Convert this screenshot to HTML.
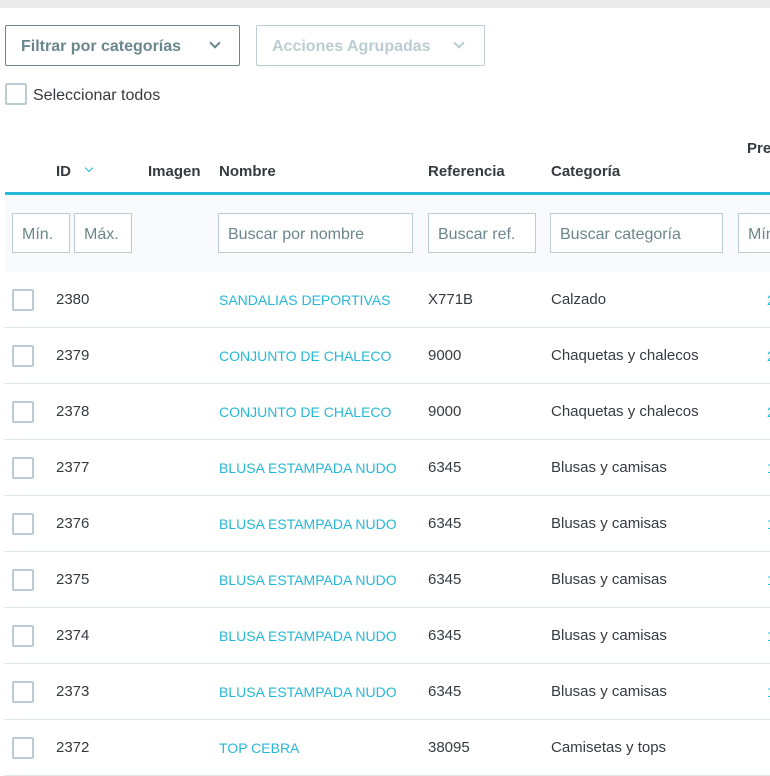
<!DOCTYPE html><html><head><style>
*{box-sizing:border-box;margin:0;padding:0}
body{width:770px;height:750px;overflow:hidden;background:#fff;font-family:"Liberation Sans",sans-serif;color:#363a41;font-size:14px;position:relative}
.a{position:absolute;white-space:nowrap}
.btn{position:absolute;top:25px;height:41px;border:1px solid #6c868e;border-radius:2px;font-size:16px;font-weight:bold;color:#6c868e;padding:12px 0 0 15px}
.chev{position:absolute;width:8px;height:8px;border-right:2px solid #6c868e;border-bottom:2px solid #6c868e;transform:rotate(45deg)}
.cb{position:absolute;width:22px;height:22px;border:2px solid #bbcdd2;border-radius:2px;background:#fff}
.th{position:absolute;top:163px;font-weight:bold;font-size:15px}
.in{position:absolute;top:213px;height:40px;border:1px solid #bbcdd2;background:#fff;color:#6c868e;font-size:16px;padding:12px 0 0 9px;overflow:hidden;white-space:nowrap}
.row{position:absolute;left:5px;right:0;height:56px;border-bottom:1px solid #dbe6e9}
.row span{position:absolute;top:19px;font-size:15px}
.row span.lk{font-size:14px;top:20px}
.lk{color:#25b9d7}
</style></head><body>
<div class="a" style="left:0;top:0;width:770px;height:8px;background:#ebebeb"></div>
<div class="btn" style="left:5px;width:235px">Filtrar por categorías<div class="chev" style="left:205px;top:13px"></div></div>
<div class="btn" style="left:256px;width:229px;border-color:#bbcdd2;color:#bbcdd2">Acciones Agrupadas<div class="chev" style="left:198px;top:13px;border-color:#bbcdd2"></div></div>
<div class="cb" style="left:5px;top:83px"></div>
<div class="a" style="left:33px;top:87px;font-size:16px">Seleccionar todos</div>
<div class="th" style="left:56px">ID</div>
<div class="a" style="left:86px;top:165px;width:6px;height:6px;border-right:1.5px solid #25b9d7;border-bottom:1.5px solid #25b9d7;transform:rotate(45deg)"></div>
<div class="th" style="left:148px">Imagen</div>
<div class="th" style="left:219px">Nombre</div>
<div class="th" style="left:428px">Referencia</div>
<div class="th" style="left:551px">Categoría</div>
<div class="th" style="left:747px;top:140px">Pre</div>
<div class="a" style="left:5px;top:192px;width:765px;height:3px;background:#25b9d7"></div>
<div class="a" style="left:5px;top:195px;width:765px;height:77px;background:#f9fafb"></div>
<div class="in" style="left:12px;width:58px">Mín.</div>
<div class="in" style="left:74px;width:58px">Máx.</div>
<div class="in" style="left:218px;width:195px">Buscar por nombre</div>
<div class="in" style="left:428px;width:108px">Buscar ref.</div>
<div class="in" style="left:550px;width:173px">Buscar categoría</div>
<div class="in" style="left:738px;width:60px">Mín.</div>
<div class="row" style="top:272px"><div class="cb" style="left:7px;top:17px"></div><span style="left:51px">2380</span><span class="lk" style="left:214px">SANDALIAS DEPORTIVAS</span><span style="left:423px">X771B</span><span style="left:546px">Calzado</span><span class="lk" style="left:762px">2</span></div>
<div class="row" style="top:328px"><div class="cb" style="left:7px;top:17px"></div><span style="left:51px">2379</span><span class="lk" style="left:214px">CONJUNTO DE CHALECO</span><span style="left:423px">9000</span><span style="left:546px">Chaquetas y chalecos</span><span class="lk" style="left:762px">2</span></div>
<div class="row" style="top:384px"><div class="cb" style="left:7px;top:17px"></div><span style="left:51px">2378</span><span class="lk" style="left:214px">CONJUNTO DE CHALECO</span><span style="left:423px">9000</span><span style="left:546px">Chaquetas y chalecos</span><span class="lk" style="left:762px">2</span></div>
<div class="row" style="top:440px"><div class="cb" style="left:7px;top:17px"></div><span style="left:51px">2377</span><span class="lk" style="left:214px">BLUSA ESTAMPADA NUDO</span><span style="left:423px">6345</span><span style="left:546px">Blusas y camisas</span><span class="lk" style="left:762px">1</span></div>
<div class="row" style="top:496px"><div class="cb" style="left:7px;top:17px"></div><span style="left:51px">2376</span><span class="lk" style="left:214px">BLUSA ESTAMPADA NUDO</span><span style="left:423px">6345</span><span style="left:546px">Blusas y camisas</span><span class="lk" style="left:762px">1</span></div>
<div class="row" style="top:552px"><div class="cb" style="left:7px;top:17px"></div><span style="left:51px">2375</span><span class="lk" style="left:214px">BLUSA ESTAMPADA NUDO</span><span style="left:423px">6345</span><span style="left:546px">Blusas y camisas</span><span class="lk" style="left:762px">1</span></div>
<div class="row" style="top:608px"><div class="cb" style="left:7px;top:17px"></div><span style="left:51px">2374</span><span class="lk" style="left:214px">BLUSA ESTAMPADA NUDO</span><span style="left:423px">6345</span><span style="left:546px">Blusas y camisas</span><span class="lk" style="left:762px">1</span></div>
<div class="row" style="top:664px"><div class="cb" style="left:7px;top:17px"></div><span style="left:51px">2373</span><span class="lk" style="left:214px">BLUSA ESTAMPADA NUDO</span><span style="left:423px">6345</span><span style="left:546px">Blusas y camisas</span><span class="lk" style="left:762px">1</span></div>
<div class="row" style="top:720px"><div class="cb" style="left:7px;top:17px"></div><span style="left:51px">2372</span><span class="lk" style="left:214px">TOP CEBRA</span><span style="left:423px">38095</span><span style="left:546px">Camisetas y tops</span></div>
</body></html>
